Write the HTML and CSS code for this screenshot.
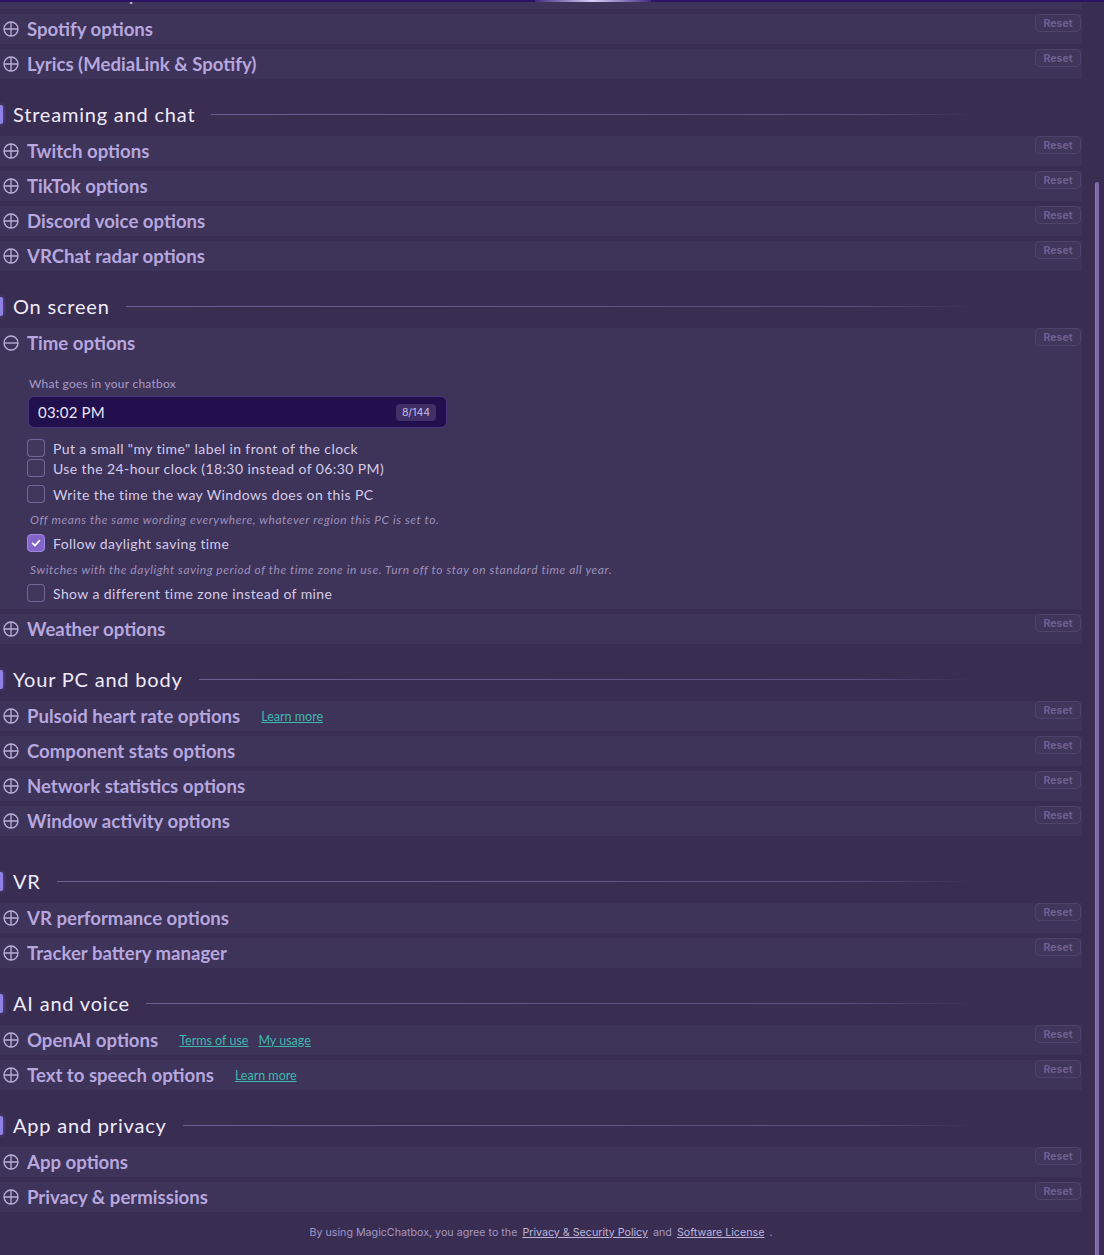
FILE: index.html
```html
<!DOCTYPE html>
<html lang="en">
<head>
  <meta charset="UTF-8">
  <title>MagicChatbox – Options</title>
  <link rel="stylesheet" href="styles.css">
</head>
<body>

<svg class="defs" width="0" height="0">
  <symbol id="i-plus" viewBox="0 0 16 16">
    <circle cx="8" cy="8" r="7" fill="none" stroke="currentColor" stroke-width="1.3"/>
    <path d="M8 1v14M1 8h14" stroke="currentColor" stroke-width="1.3"/>
  </symbol>
  <symbol id="i-minus" viewBox="0 0 16 16">
    <circle cx="8" cy="8" r="7" fill="none" stroke="currentColor" stroke-width="1.3"/>
    <path d="M1 8h14" stroke="currentColor" stroke-width="1.3"/>
  </symbol>
</svg>

<div class="topline"></div>
<div class="scrollbar"><div class="thumb" id="thumb"></div></div>

<div class="app" id="app">
  <div class="options">

    <div class="section"><span class="section-title">Chatbox and media</span></div>
    <div class="row"><svg class="toggle"><use href="#i-plus"/></svg><span class="row-title">Status options</span><button class="reset">Reset</button></div>
    <div class="row"><svg class="toggle"><use href="#i-plus"/></svg><span class="row-title">Personal message options</span><button class="reset">Reset</button></div>
    <div class="row"><svg class="toggle"><use href="#i-plus"/></svg><span class="row-title">Chatting options</span><button class="reset">Reset</button></div>
    <div class="row"><svg class="toggle"><use href="#i-plus"/></svg><span class="row-title">Soundpad options</span><button class="reset">Reset</button></div>
    <div class="row"><svg class="toggle"><use href="#i-plus"/></svg><span class="row-title">MediaLink options</span><button class="reset">Reset</button></div>
    <div class="row"><svg class="toggle"><use href="#i-plus"/></svg><span class="row-title">Spotify options</span><button class="reset">Reset</button></div>
    <div class="row"><svg class="toggle"><use href="#i-plus"/></svg><span class="row-title">Lyrics (MediaLink &amp; Spotify)</span><button class="reset">Reset</button></div>

    <div class="section"><span class="section-title">Streaming and chat</span></div>
    <div class="row"><svg class="toggle"><use href="#i-plus"/></svg><span class="row-title">Twitch options</span><button class="reset">Reset</button></div>
    <div class="row"><svg class="toggle"><use href="#i-plus"/></svg><span class="row-title">TikTok options</span><button class="reset">Reset</button></div>
    <div class="row"><svg class="toggle"><use href="#i-plus"/></svg><span class="row-title">Discord voice options</span><button class="reset">Reset</button></div>
    <div class="row"><svg class="toggle"><use href="#i-plus"/></svg><span class="row-title">VRChat radar options</span><button class="reset">Reset</button></div>

    <div class="section"><span class="section-title">On screen</span></div>
    <div class="row open"><svg class="toggle"><use href="#i-minus"/></svg><span class="row-title">Time options</span><button class="reset">Reset</button></div>
    <div class="panel">
      <div class="field-label">What goes in your chatbox</div>
      <div class="field">
        <input class="field-input" type="text" value="03:02 PM">
        <span class="counter">8/144</span>
      </div>

      <label class="check first"><span class="box"></span>Put a small "my time" label in front of the clock</label>
      <label class="check tight"><span class="box"></span>Use the 24-hour clock (18:30 instead of 06:30 PM)</label>
      <label class="check"><span class="box"></span>Write the time the way Windows does on this PC</label>
      <div class="hint">Off means the same wording everywhere, whatever region this PC is set to.</div>
      <label class="check"><span class="box checked"><svg viewBox="0 0 12 12"><path d="M2.6 6.3l2.3 2.3 4.6-5" fill="none" stroke="#fff" stroke-width="1.7" stroke-linecap="round" stroke-linejoin="round"/></svg></span>Follow daylight saving time</label>
      <div class="hint wide">Switches with the daylight saving period of the time zone in use. Turn off to stay on standard time all year.</div>
      <label class="check"><span class="box"></span>Show a different time zone instead of mine</label>
    </div>
    <div class="row"><svg class="toggle"><use href="#i-plus"/></svg><span class="row-title">Weather options</span><button class="reset">Reset</button></div>

    <div class="section"><span class="section-title">Your PC and body</span></div>
    <div class="row"><svg class="toggle"><use href="#i-plus"/></svg><span class="row-title">Pulsoid heart rate options</span><a class="link" href="#">Learn more</a><button class="reset">Reset</button></div>
    <div class="row"><svg class="toggle"><use href="#i-plus"/></svg><span class="row-title">Component stats options</span><button class="reset">Reset</button></div>
    <div class="row"><svg class="toggle"><use href="#i-plus"/></svg><span class="row-title">Network statistics options</span><button class="reset">Reset</button></div>
    <div class="row"><svg class="toggle"><use href="#i-plus"/></svg><span class="row-title">Window activity options</span><button class="reset">Reset</button></div>

    <div class="section spaced"><span class="section-title">VR</span></div>
    <div class="row"><svg class="toggle"><use href="#i-plus"/></svg><span class="row-title">VR performance options</span><button class="reset">Reset</button></div>
    <div class="row"><svg class="toggle"><use href="#i-plus"/></svg><span class="row-title">Tracker battery manager</span><button class="reset">Reset</button></div>

    <div class="section"><span class="section-title">AI and voice</span></div>
    <div class="row"><svg class="toggle"><use href="#i-plus"/></svg><span class="row-title">OpenAI options</span><a class="link" href="#">Terms of use</a><a class="link" href="#">My usage</a><button class="reset">Reset</button></div>
    <div class="row"><svg class="toggle"><use href="#i-plus"/></svg><span class="row-title">Text to speech options</span><a class="link" href="#">Learn more</a><button class="reset">Reset</button></div>

    <div class="section"><span class="section-title">App and privacy</span></div>
    <div class="row"><svg class="toggle"><use href="#i-plus"/></svg><span class="row-title">App options</span><button class="reset">Reset</button></div>
    <div class="row"><svg class="toggle"><use href="#i-plus"/></svg><span class="row-title">Privacy &amp; permissions</span><button class="reset">Reset</button></div>

    <div class="footer">
      By using MagicChatbox, you agree to the
      <a href="#">Privacy &amp; Security Policy</a>
      and
      <a href="#">Software License</a>
      .
    </div>

  </div>
</div>

<script>
  // keep the list scrolled to the end and size the scroll thumb to match
  const app = document.getElementById("app");
  const thumb = document.getElementById("thumb");
  app.scrollTop = app.scrollHeight;

  function updateThumb() {
    const view = app.clientHeight;
    const total = app.scrollHeight;
    thumb.style.height = (view / total * view) + "px";
    thumb.style.top = (app.scrollTop / total * view) + "px";
  }
  app.addEventListener("scroll", updateThumb);
  updateThumb();
</script>

</body>
</html>
```

FILE: styles.css
```css
* {
  box-sizing: border-box;
}
html, body {
  margin: 0;
  height: 100%;
}
body {
  font-family: Lato, "Noto Sans", sans-serif;
  background: #392d52;
  color: #d6cdef;
  overflow: hidden;
  position: relative;
}
.defs {
  position: absolute;
}

/* thin header edge with the glow in the middle */
.topline {
  position: absolute;
  top: 0;
  left: 0;
  right: 0;
  height: 2px;
  background: #2b1562;
  z-index: 5;
}
.topline::after {
  content: "";
  position: absolute;
  top: 0;
  left: 535px;
  width: 116px;
  height: 2px;
  background: linear-gradient(90deg, rgba(150,130,230,0.2), #d8d0fa 50%, rgba(150,130,230,0.2));
}

.app {
  height: 100vh;
  overflow-y: auto;
  scrollbar-width: none;
}
.app::-webkit-scrollbar {
  display: none;
}

/* slim scrollbar drawn over the right edge */
.scrollbar {
  position: absolute;
  top: 0;
  bottom: 0;
  right: 5px;
  width: 4px;
  z-index: 4;
}
.thumb {
  position: absolute;
  left: 0;
  width: 4px;
  background: #7b69a9;
  border-radius: 2px 2px 0 0;
  box-shadow: inset 1px 0 0 rgba(255,255,255,0.12);
}

.options {
  width: 1082px;
  display: flex;
  flex-direction: column;
}

/* section headings */
.section {
  display: flex;
  align-items: center;
  height: 36px;
  margin: 12px 0 4px;
}
.section.spaced {
  margin-top: 22px;
}
.section::before {
  content: "";
  width: 3px;
  height: 19px;
  margin-right: 10px;
  background: #8f80e6;
  border-radius: 0 2px 2px 0;
  box-shadow: 0 0 4px rgba(160,140,255,0.5);
}
.section-title {
  font-size: 20px;
  color: #efebfa;
  letter-spacing: 0.8px;
}
.section::after {
  content: "";
  flex: 1;
  height: 1px;
  margin: 1px 110px 0 16px;
  background: linear-gradient(90deg, rgba(170,155,225,0.45), rgba(170,155,225,0.32) 85%, rgba(170,155,225,0) 100%);
}

/* collapsible option rows */
.row {
  display: flex;
  align-items: center;
  height: 30px;
  margin-bottom: 5px;
  background: #3e3359;
}
.row.open {
  margin-bottom: 0;
}
.toggle {
  width: 16px;
  height: 16px;
  margin: 0 8px 0 3px;
  color: #bcb1da;
}
.row-title {
  font-size: 18.6px;
  font-weight: 700;
  color: #b6a7df;
}
.link {
  margin-left: 21px;
  font-size: 12.5px;
  color: #3fb8ae;
  text-decoration: underline;
}
.link + .link {
  margin-left: 10px;
}
.reset {
  margin-left: auto;
  margin-right: 1px;
  align-self: flex-start;
  height: 18px;
  width: 46px;
  padding: 0;
  font-family: Inter, sans-serif;
  font-size: 10.5px;
  font-weight: 700;
  color: #6c6090;
  background: rgba(255,255,255,0.01);
  border: 1px solid rgba(190,175,240,0.12);
  border-radius: 5px;
}

/* expanded time options */
.panel {
  background: #3e3359;
  padding: 19px 0 7px 27px;
  margin-bottom: 5px;
}
.field-label {
  font-size: 12px;
  line-height: 14px;
  letter-spacing: 0.25px;
  color: #a89cc8;
  margin: 0 0 5px 2px;
}
.field {
  display: flex;
  align-items: center;
  width: 419px;
  height: 32px;
  margin-left: 1px;
  padding: 0 10px 0 9px;
  background: #210f4e;
  border: 1px solid rgba(150,130,215,0.35);
  border-radius: 6px;
}
.field-input {
  flex: 1;
  border: none;
  outline: none;
  background: transparent;
  font-family: Lato, sans-serif;
  font-size: 15px;
  letter-spacing: 0.2px;
  color: #ebe6f8;
  padding: 0;
}
.counter {
  font-family: Inter, sans-serif;
  font-size: 10.5px;
  color: #c6bce4;
  background: rgba(255,255,255,0.14);
  border-radius: 4px;
  padding: 2px 6px;
}
.check {
  display: flex;
  align-items: center;
  gap: 8px;
  height: 18px;
  margin-top: 7px;
  font-size: 14px;
  letter-spacing: 0.4px;
  color: #d3cbea;
}
.check.first {
  margin-top: 11px;
}
.check.tight {
  margin-top: 2px;
}
.check + .check:not(.tight) {
  margin-top: 8px;
}
.box {
  flex: none;
  width: 18px;
  height: 18px;
  border: 1px solid rgba(175,160,225,0.45);
  border-radius: 4px;
  background: rgba(255,255,255,0.02);
  display: flex;
  align-items: center;
  justify-content: center;
}
.box.checked {
  background: #8364c8;
  border-color: #a088e0;
}
.box svg {
  width: 12px;
  height: 12px;
}
.hint {
  margin: 10px 0 0 3px;
  font-size: 12px;
  line-height: 14px;
  letter-spacing: 0.55px;
  font-style: italic;
  color: #9c91bb;
}
.hint.wide {
  margin-top: 11px;
}
.hint + .check {
  margin-top: 7px;
}

.footer {
  padding: 9px 0 15px;
  line-height: 14px;
  text-align: center;
  font-family: Inter, sans-serif;
  font-size: 10.7px;
  color: #a398c2;
}
.footer a {
  color: #bfb5dc;
  margin: 0 2px;
}
```
